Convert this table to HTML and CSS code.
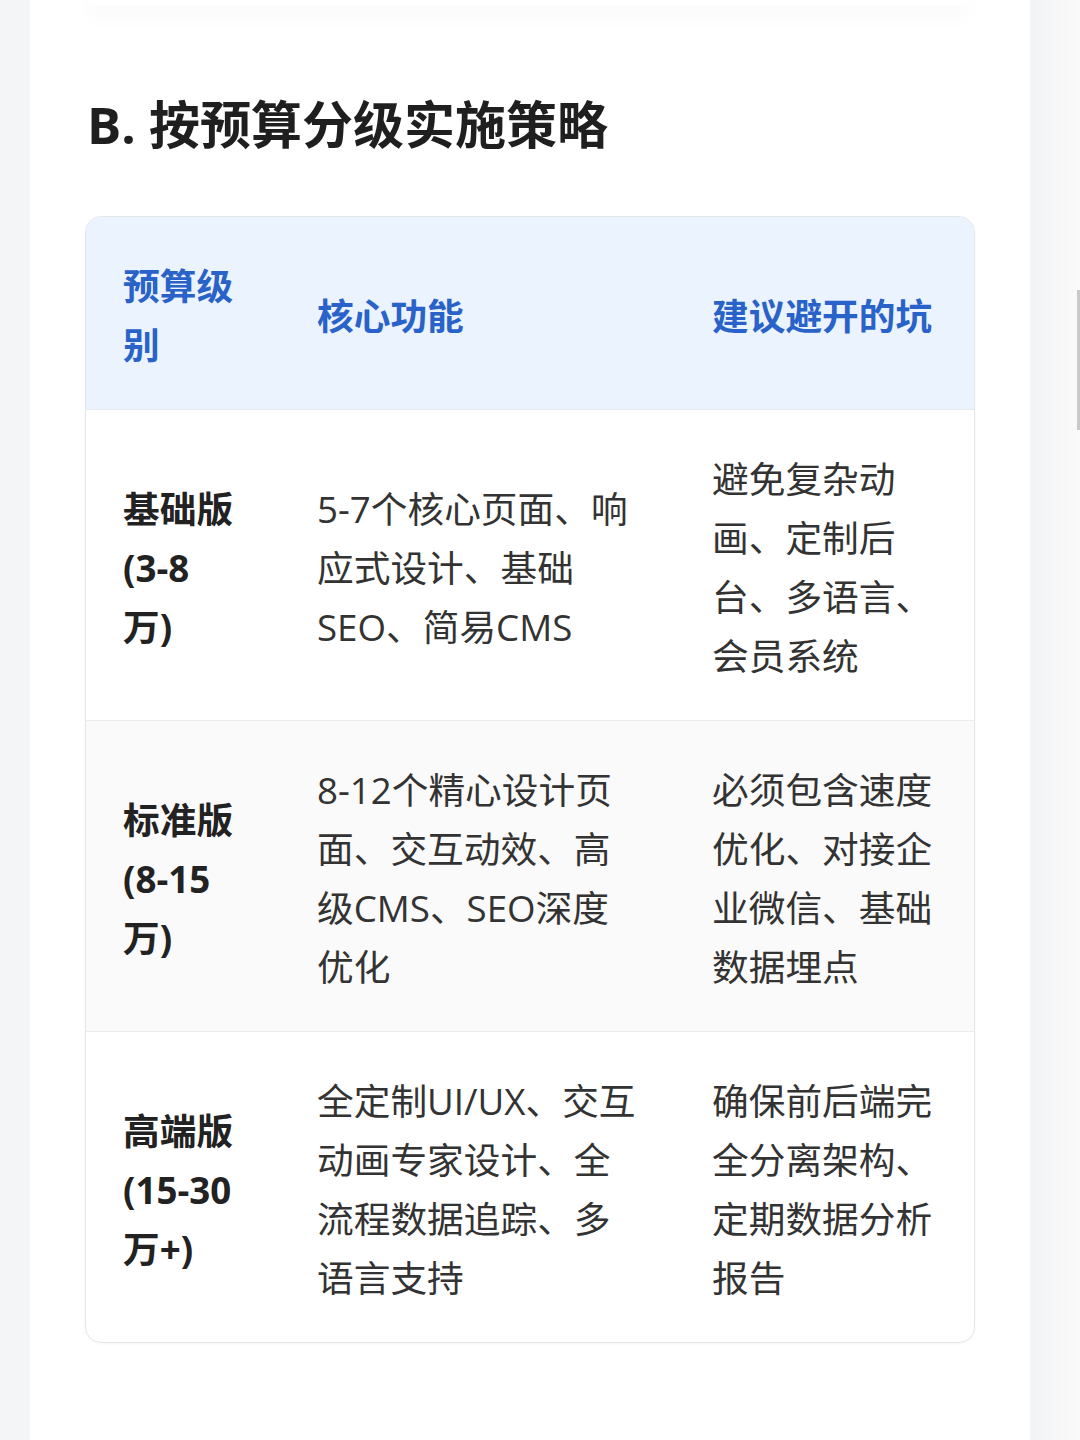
FILE: index.html
```html
<!DOCTYPE html>
<html lang="zh-CN">
<head>
<meta charset="utf-8">
<title>按预算分级实施策略</title>
<link rel="stylesheet" href="styles.css">
</head>
<body>
<div class="page">
  <div class="prev-card"></div>
  <h2 class="section-title">B. 按预算分级实施策略</h2>
  <div class="table-wrap">
    <table class="budget-table">
      <colgroup>
        <col class="c1">
        <col class="c2">
        <col class="c3">
      </colgroup>
      <thead>
        <tr>
          <th>预算级别</th>
          <th>核心功能</th>
          <th>建议避开的坑</th>
        </tr>
      </thead>
      <tbody>
        <tr>
          <td class="level">基础版 (3-8万)</td>
          <td>5-7个核心页面、响应式设计、基础SEO、简易CMS</td>
          <td>避免复杂动画、定制后台、多语言、会员系统</td>
        </tr>
        <tr class="alt">
          <td class="level">标准版 (8-15万)</td>
          <td>8-12个精心设计页面、交互动效、高级CMS、SEO深度优化</td>
          <td>必须包含速度优化、对接企业微信、基础数据埋点</td>
        </tr>
        <tr>
          <td class="level">高端版 (15-30万+)</td>
          <td>全定制UI/UX、交互动画专家设计、全流程数据追踪、多语言支持</td>
          <td>确保前后端完全分离架构、定期数据分析报告</td>
        </tr>
      </tbody>
    </table>
  </div>
</div>
<div class="edge-mark"></div>
</body>
</html>
```

FILE: styles.css
```css
html, body {
  margin: 0;
  padding: 0;
}
body {
  background: linear-gradient(to right, #f4f5f7 0, #f4f5f7 30px, #ffffff 30px, #ffffff 1030px, #f2f3f5 1030px, #fafafa 1080px);
  font-family: "Open Sans", "Noto Sans CJK SC", sans-serif;
  color: #333;
  height: 1440px;
  position: relative;
  overflow: hidden;
}
.page {
  width: 890px;
  height: 1440px;
  margin-left: 30px;
  background: #fff;
  padding: 0 55px;
  box-sizing: content-box;
}
.prev-card {
  height: 5px;
  margin: 0 5px 0 3px;
  background: #fff;
  border-radius: 0 0 16px 16px;
  box-shadow: 0 8px 20px rgba(0, 0, 0, 0.08);
}
.section-title {
  margin: 89px 0 62px 2px;
  font-size: 51px;
  line-height: 60px;
  font-weight: 700;
  color: #1f1f1f;
  letter-spacing: 0;
}
.table-wrap {
  border: 1px solid #e4e6ea;
  border-radius: 16px;
  overflow: hidden;
  box-shadow: 0 1px 3px rgba(0, 0, 0, 0.04);
}
.budget-table {
  width: 100%;
  border-collapse: collapse;
  table-layout: fixed;
  font-size: 36.7px;
  line-height: 59px;
}
.c1 { width: 194px; }
.c2 { width: 395px; }
.c3 { width: 299px; }
.budget-table th {
  background: #ebf3fe;
  color: #2962c8;
  font-weight: 700;
  text-align: left;
  vertical-align: middle;
  padding: 40px 37px 34px 37px;
  border-bottom: 1px solid #e6e9ee;
}
.budget-table td {
  text-align: left;
  vertical-align: middle;
  padding: 40px 37px 34px 37px;
  border-bottom: 1px solid #ececee;
  color: #333;
}
.budget-table tbody tr:last-child td {
  border-bottom: none;
}
.budget-table .alt td {
  background: #fafafa;
}
.budget-table td.level {
  font-weight: 700;
  color: #222;
  padding-right: 43px;
}
.edge-mark {
  position: absolute;
  right: 0;
  top: 290px;
  width: 3px;
  height: 140px;
  background: #c9c9c9;
}
```
